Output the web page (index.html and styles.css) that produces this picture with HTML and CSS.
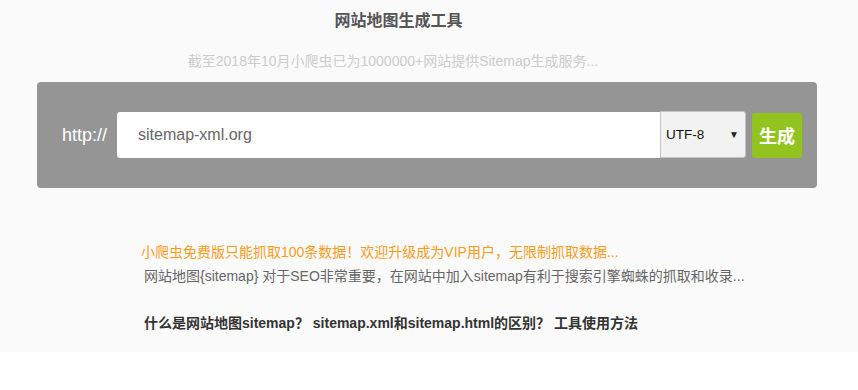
FILE: index.html
```html
<!DOCTYPE html>
<html lang="zh-CN">
<head>
<meta charset="utf-8">
<title>网站地图生成工具</title>
<link rel="stylesheet" href="styles.css">
</head>
<body>
<div class="page">
  <header class="header">
    <h1 class="title">网站地图生成工具</h1>
    <p class="subtitle">截至2018年10月小爬虫已为1000000+网站提供Sitemap生成服务...</p>
  </header>
  <div class="panel">
    <span class="proto">http://</span>
    <div class="url-input">sitemap-xml.org</div>
    <div class="charset"><span class="charset-text">UTF-8</span><span class="charset-arrow">&#9660;</span></div>
    <div class="gen-btn">生成</div>
  </div>
  <div class="notes">
    <p class="note-warn">小爬虫免费版只能抓取100条数据！欢迎升级成为VIP用户，无限制抓取数据...</p>
    <p class="note-info">网站地图{sitemap} 对于SEO非常重要，在网站中加入sitemap有利于搜索引擎蜘蛛的抓取和收录...</p>
    <p class="note-links">什么是网站地图sitemap？ sitemap.xml和sitemap.html的区别？ 工具使用方法</p>
  </div>
</div>
</body>
</html>
```
FILE: styles.css
```css
html, body {
  margin: 0;
  padding: 0;
  background: #ffffff;
  font-family: "Liberation Sans", "Noto Sans CJK SC", sans-serif;
}
.page {
  background: #fafafa;
  height: 352px;
  overflow: hidden;
}
.header {
  width: 797px;
  text-align: center;
  padding-top: 11px;
}
.title {
  margin: 0;
  font-size: 16px;
  line-height: 20px;
  font-weight: bold;
  color: #555555;
}
.subtitle {
  margin: 20px 0 0 0;
  padding-right: 11px;
  font-size: 14px;
  line-height: 20px;
  color: #cccccc;
}
.panel {
  margin: 11px 0 0 37px;
  width: 780px;
  height: 106px;
  box-sizing: border-box;
  padding: 30px 15px 30px 25px;
  background: #959595;
  border-radius: 4px;
  display: flex;
  align-items: center;
}
.proto {
  font-size: 18px;
  color: #ffffff;
  width: 45px;
  margin-right: 10px;
}
.url-input {
  width: 543px;
  height: 46px;
  box-sizing: border-box;
  background: #ffffff;
  border-radius: 3px 0 0 3px;
  padding-left: 21px;
  display: flex;
  align-items: center;
  font-size: 16px;
  color: #666666;
}
.charset {
  width: 86px;
  height: 47px;
  box-sizing: border-box;
  margin-top: -1px;
  background: #f2f2f2;
  border: 1px solid #c4c4c4;
  border-radius: 0 3px 3px 0;
  display: flex;
  align-items: center;
  padding: 0 6px 0 5px;
  font-size: 13.5px;
  color: #111111;
}
.charset-text {
  flex: 1;
}
.charset-arrow {
  font-size: 10px;
  color: #222222;
}
.gen-btn {
  width: 50px;
  height: 45px;
  margin-left: 6px;
  background: #92c31f;
  border-radius: 3px;
  color: #ffffff;
  font-size: 18px;
  font-weight: bold;
  display: flex;
  align-items: center;
  justify-content: center;
}
.notes {
  padding: 52px 0 0 141px;
}
.notes p {
  margin: 0;
  font-size: 14px;
  line-height: 24px;
}
.note-warn {
  color: #ff9a1a;
}
.note-info {
  color: #666666;
  padding-left: 3px;
}
.note-links {
  padding-left: 3px;
  margin-top: 23px !important;
  font-weight: bold;
  color: #333333;
}
```
